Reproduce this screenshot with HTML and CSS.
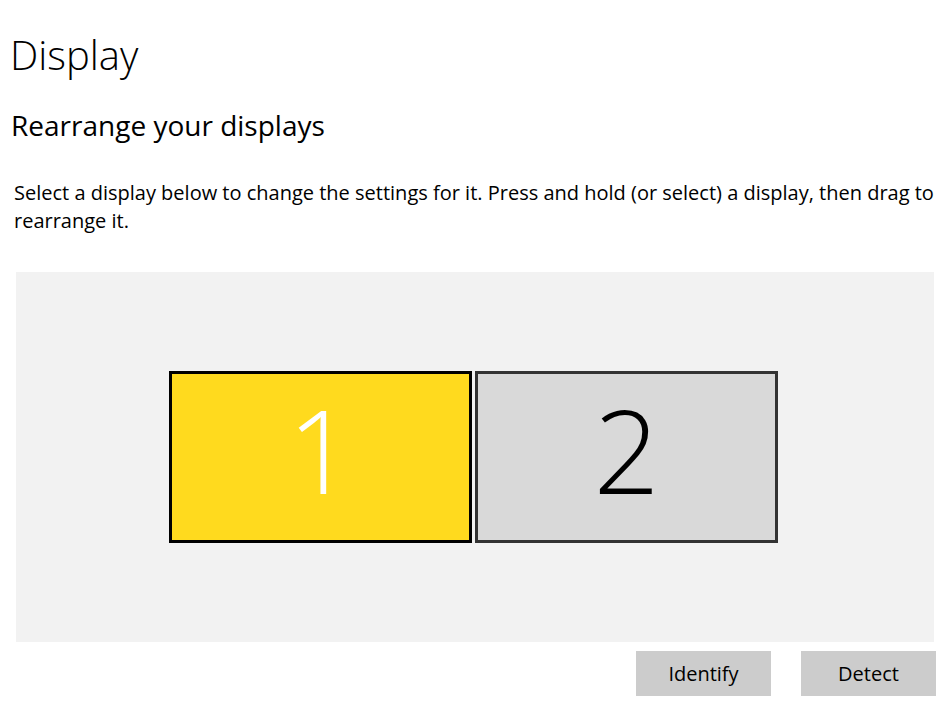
FILE: index.html
```html
<!DOCTYPE html>
<html lang="en">
<head>
    <meta charset="UTF-8">
    <meta name="viewport" content="width=device-width, initial-scale=1.0">
    <title>Display</title>
    <link rel="stylesheet" href="styles.css">
</head>
<body>

<div class="page">
    <h1 class="title">Display</h1>
    <h2 class="subtitle">Rearrange your displays</h2>
    <p class="hint">Select a display below to change the settings for it. Press and hold (or select) a display, then drag to rearrange it.</p>

    <div class="canvas">
        <div class="monitor selected">1</div>
        <div class="monitor">2</div>
    </div>

    <div class="actions">
        <button class="btn">Identify</button>
        <button class="btn">Detect</button>
    </div>
</div>

</body>
</html>
```

FILE: styles.css
```css
body {
    margin: 0;
    background-color: #fff;
    color: #000;
    font-family: "Open Sans", "Noto Sans", sans-serif;
}
.page {
    width: 951px;
}
.title {
    margin: 0;
    padding: 27px 0 0 10px;
    font-size: 40px;
    font-weight: 300;
    line-height: 56px;
}
.subtitle {
    margin: 0;
    padding: 22px 0 0 11px;
    font-size: 28px;
    font-weight: 400;
    line-height: 40px;
}
.hint {
    margin: 0;
    padding: 34px 8px 0 14px;
    font-size: 20px;
    line-height: 28px;
}
.canvas {
    box-sizing: border-box;
    margin: 37px 0 0 16px;
    width: 918px;
    height: 370px;
    padding-right: 3px;
    background-color: #f2f2f2;
    display: flex;
    justify-content: center;
    align-items: center;
    gap: 3px;
}
.monitor {
    box-sizing: border-box;
    width: 303px;
    height: 172px;
    padding-bottom: 16px;
    border: 3px solid #333;
    background-color: #d9d9d9;
    display: flex;
    justify-content: center;
    align-items: center;
    font-size: 116px;
    font-weight: 300;
    line-height: 1;
    color: #000;
}
.monitor.selected {
    border-color: #000;
    background-color: #ffda1e;
    color: #fff;
}
.actions {
    display: flex;
    justify-content: flex-end;
    gap: 30px;
    margin: 9px 15px 0 0;
}
.btn {
    width: 135px;
    height: 45px;
    border: none;
    background-color: #cccccc;
    color: #000;
    font-family: "Open Sans", "Noto Sans", sans-serif;
    font-size: 20px;
    padding: 0;
}
```
